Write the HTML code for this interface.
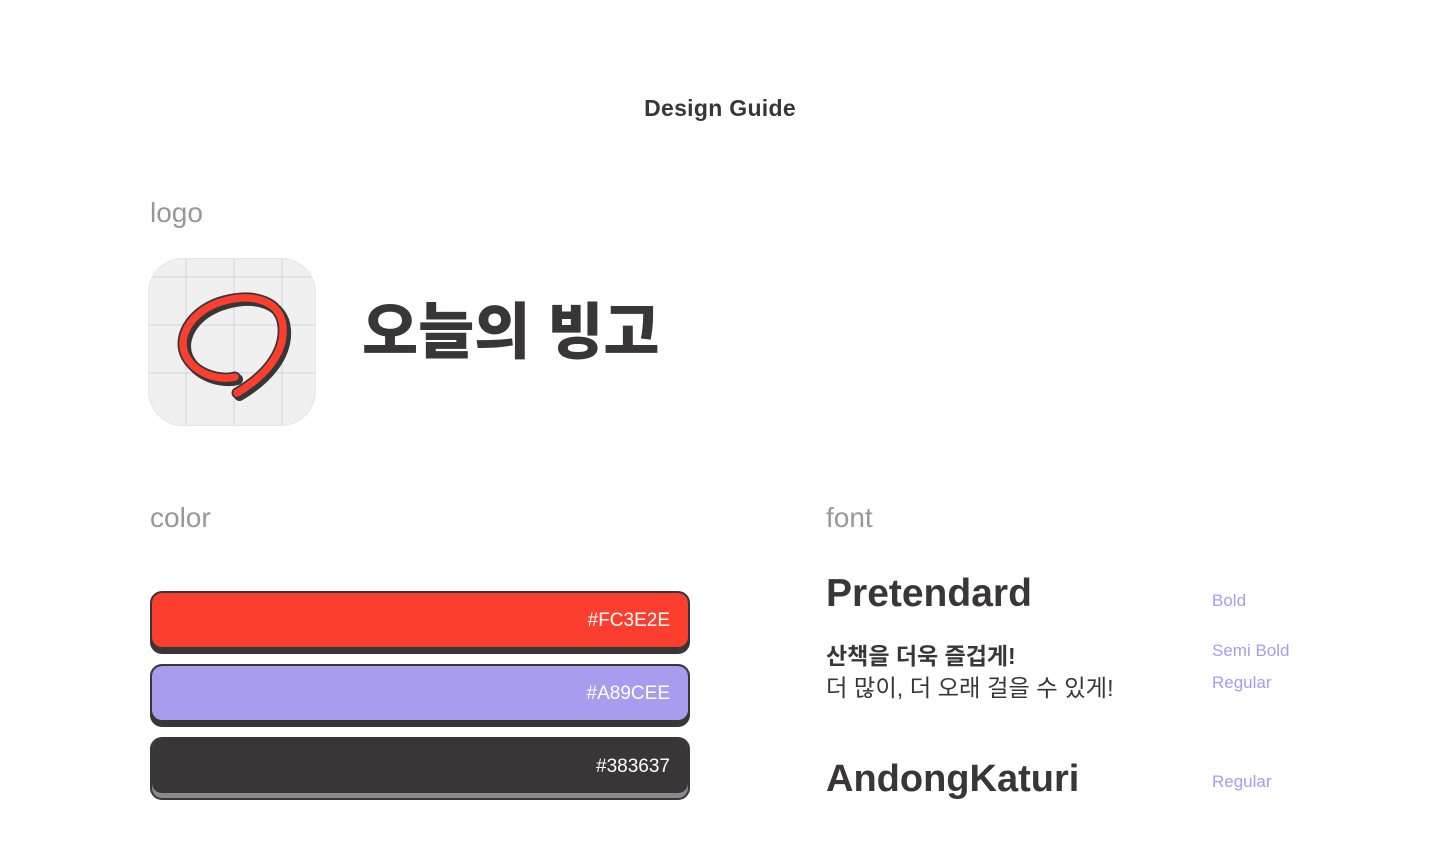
<!DOCTYPE html>
<html><head><meta charset="utf-8">
<style>
*{margin:0;padding:0;box-sizing:border-box}
body{width:1440px;height:860px;background:#fff;position:relative;font-family:"Liberation Sans","Noto Sans CJK KR",sans-serif;color:#383637;overflow:hidden}
.a{position:absolute}
.lbl{color:#98989b;font-size:28px}
.bar{position:absolute;left:150px;width:540px;height:63px;border:2px solid #383637;border-radius:12px;background:#383637;overflow:hidden}
.bar .in{position:absolute;left:0;right:0;top:0;height:54px;border-radius:10px;color:#fff;font-size:19px;text-align:right;padding-right:18px;line-height:56px}
.p{color:#a89cee;font-size:17px}
</style></head><body>
<div class="a" style="left:0;width:1440px;top:95px;text-align:center;font-size:23px;font-weight:bold;letter-spacing:0.3px">Design Guide</div>
<div class="a lbl" style="left:150px;top:197px">logo</div>
<div class="a" style="left:149px;top:259px;width:166px;height:166px;border-radius:34px;background:#f0f0f1;overflow:hidden;box-shadow:0 0 0 1px #e6e6e8">
<svg width="166" height="166" viewBox="0 0 166 166">
<g stroke="#d3d3d9" stroke-width="1"><line x1="37" y1="0" x2="37" y2="166"/><line x1="85" y1="0" x2="85" y2="166"/><line x1="133" y1="0" x2="133" y2="166"/><line x1="0" y1="18" x2="166" y2="18"/><line x1="0" y1="66" x2="166" y2="66"/><line x1="0" y1="114" x2="166" y2="114"/></g>
<g fill="none" stroke-linecap="round">
<path d="M86 118 C70 122 45 115 36 95 C28 75 45 50 75 42 C105 34 132 42 134 68 C136 95 115 118 88 134" stroke="#383637" stroke-width="11" transform="translate(2.5,2.5)"/>
<path d="M86 118 C70 122 45 115 36 95 C28 75 45 50 75 42 C105 34 132 42 134 68 C136 95 115 118 88 134" stroke="#383637" stroke-width="11"/>
<path d="M86 118 C70 122 45 115 36 95 C28 75 45 50 75 42 C105 34 132 42 134 68 C136 95 115 118 88 134" stroke="#fc3e2e" stroke-width="7.5"/>
</g>
</svg></div>
<div class="a" style="left:362px;top:290px;font-size:61px;font-weight:900;line-height:84px">오늘의 빙고</div>
<div class="a lbl" style="left:150px;top:502px">color</div>
<div class="a lbl" style="left:826px;top:502px">font</div>
<div class="bar" style="top:591px"><div class="in" style="background:#fc3e2e">#FC3E2E</div></div>
<div class="bar" style="top:664px"><div class="in" style="background:#a89cee">#A89CEE</div></div>
<div class="bar" style="top:737px;background:#8a888d"><div class="in" style="background:#383637">#383637</div></div>
<div class="a" style="left:826px;top:572px;font-size:39px;font-weight:bold">Pretendard</div>
<div class="a p" style="left:1212px;top:591px">Bold</div>
<div class="a" style="left:826px;top:637px;font-size:23px;font-weight:bold">산책을 더욱 즐겁게!</div>
<div class="a p" style="left:1212px;top:641px">Semi Bold</div>
<div class="a" style="left:826px;top:669px;font-size:23.3px">더 많이, 더 오래 걸을 수 있게!</div>
<div class="a p" style="left:1212px;top:673px">Regular</div>
<div class="a" style="left:826px;top:758px;font-size:38px;font-weight:bold">AndongKaturi</div>
<div class="a p" style="left:1212px;top:772px">Regular</div>
</body></html>
